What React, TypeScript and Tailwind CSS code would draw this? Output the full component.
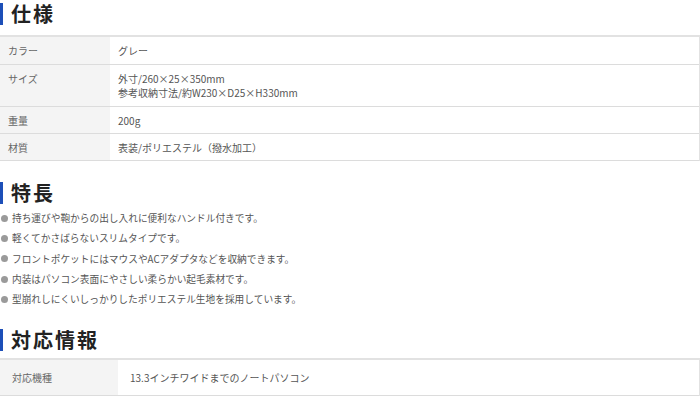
const font = { fontFamily: '"Noto Sans CJK JP", "Noto Sans", sans-serif' };

const specs = [
  { label: "カラー", value: ["グレー"], h: "h-[28px]" },
  { label: "サイズ", value: ["外寸/260×25×350mm", "参考収納寸法/約W230×D25×H330mm"], h: "h-[42px]" },
  { label: "重量", value: ["200g"], h: "h-[27px]" },
  { label: "材質", value: ["表装/ポリエステル（撥水加工）"], h: "h-[27px]" },
];

const features = [
  "持ち運びや鞄からの出し入れに便利なハンドル付きです。",
  "軽くてかさばらないスリムタイプです。",
  "フロントポケットにはマウスやACアダプタなどを収納できます。",
  "内装はパソコン表面にやさしい柔らかい起毛素材です。",
  "型崩れしにくいしっかりしたポリエステル生地を採用しています。",
];

function Heading({ title }: { title: string }) {
  return (
    <div className="flex items-center h-[22px]">
      <div className="w-[3px] h-[22px] bg-[#1d4fb8]" />
      <h2 className="ml-[8px] text-[20px] leading-[22px] font-bold tracking-[2px] text-[#222]">
        {title}
      </h2>
    </div>
  );
}

export default function App() {
  return (
    <div className="w-[700px] h-[396px] overflow-hidden bg-white text-[#555]" style={font}>
      <div className="pt-[3px]">
        <Heading title="仕様" />
      </div>

      {/* 仕様 table */}
      <div className="mt-[10px] border-t-2 border-r border-[#e2e2e2]">
        {specs.map((s) => (
          <div key={s.label} className={`flex border-b border-[#dcdcdc] ${s.h}`}>
            <div className="w-[110px] shrink-0 bg-[#f4f4f4] pl-[8px] pt-[7px] text-[10px] leading-[14px] text-[#666]">
              {s.label}
            </div>
            <div className="pl-[8px] pt-[7px] text-[10px] leading-[14px]">
              {s.value.map((v) => (
                <div key={v}>{v}</div>
              ))}
            </div>
          </div>
        ))}
      </div>

      <div className="mt-[21px]">
        <Heading title="特長" />
      </div>

      <ul className="mt-[4px] flex flex-col">
        {features.map((f) => (
          <li key={f} className="flex items-center h-[20.4px] text-[9.7px]">
            <span className="w-[7px] h-[7px] rounded-full bg-[#9a9a9a] ml-[1px] mr-[4px]" />
            {f}
          </li>
        ))}
      </ul>

      <div className="mt-[19px]">
        <Heading title="対応情報" />
      </div>

      <div className="mt-[7px] border-t-2 border-r border-[#e2e2e2]">
        <div className="flex border-b border-[#dcdcdc] h-[36px]">
          <div className="w-[118px] shrink-0 bg-[#f4f4f4] pl-[12px] flex items-center text-[10px] text-[#666]">
            対応機種
          </div>
          <div className="pl-[12px] flex items-center text-[10px]">13.3インチワイドまでのノートパソコン</div>
        </div>
      </div>
    </div>
  );
}
